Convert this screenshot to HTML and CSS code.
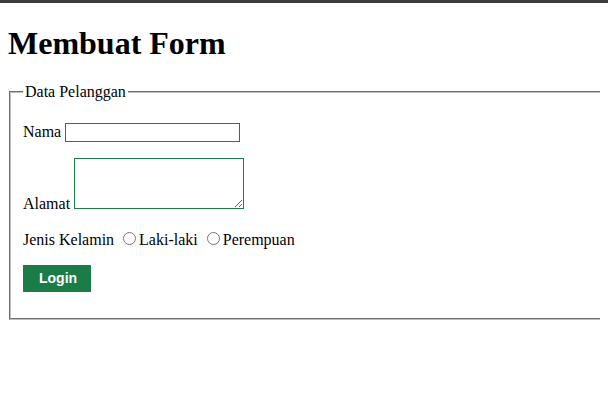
FILE: index.html
```html
<!DOCTYPE html>
<html>
<head>
<meta charset="utf-8">
<link rel="stylesheet" href="styles.css">
</head>
<body>
<div class="topbar"></div>
<h1 class="title">Membuat Form</h1>
<form class="form">
<fieldset class="group">
<legend class="legend">Data Pelanggan</legend>
<p class="row">Nama <input class="field" type="text"></p>
<p class="row">Alamat <textarea class="area"></textarea></p>
<p class="row">Jenis Kelamin <input type="radio" name="jk" class="radio">Laki-laki <input type="radio" name="jk" class="radio">Perempuan</p>
<p class="row"><button type="button" class="btn">Login</button></p>
</fieldset>
</form>
</body>
</html>
```
FILE: styles.css
```css
html, body {
  font-family: "Liberation Serif", "Times New Roman", serif;
  font-size: 16px;
  color: #000;
  background: #fff;
}
body {
  margin: 8px;
}
.topbar {
  position: fixed;
  top: 0;
  left: 0;
  right: 0;
  height: 3px;
  background: #3c3c3c;
}
.title {
  font-size: 32px;
  font-weight: bold;
  margin: 17px 0 21px;
}
.form {
  margin: 0 -8px 0 0;
}
.group {
  box-sizing: border-box;
  width: 599px;
  margin: 0 0 0 1px;
  min-width: 0;
  padding: 0.35em 12px 10px 12px;
  border-top: 2px groove #c0c0c0;
  border-left: 2px groove #c0c0c0;
  border-bottom: 2px groove #c0c0c0;
  border-right: 0 none;
}
.legend {
  padding: 0 2px;
}
.row {
  margin: 16px 0;
}
.field {
  box-sizing: border-box;
  width: 175px;
  height: 19px;
  border: 0;
  box-shadow: inset 0 0 0 1px #1a8048;
  outline: none;
  background: #fff;
  padding: 2px 3px;
  margin: 0;
  vertical-align: baseline;
}
.area {
  box-sizing: border-box;
  width: 170px;
  height: 51px;
  border: 1px solid #1a8048;
  margin: 0;
  vertical-align: baseline;
}
.radio {
  margin: 3px 3px 0 5px;
}
.btn {
  background: #1c7c48;
  color: #fff;
  border: none;
  font-family: "Liberation Sans", Arial, sans-serif;
  font-weight: bold;
  font-size: 14px;
  line-height: 17px;
  padding: 5px 16px;
  margin: 0;
  width: 68px;
  height: 27px;
  vertical-align: top;
}
```
